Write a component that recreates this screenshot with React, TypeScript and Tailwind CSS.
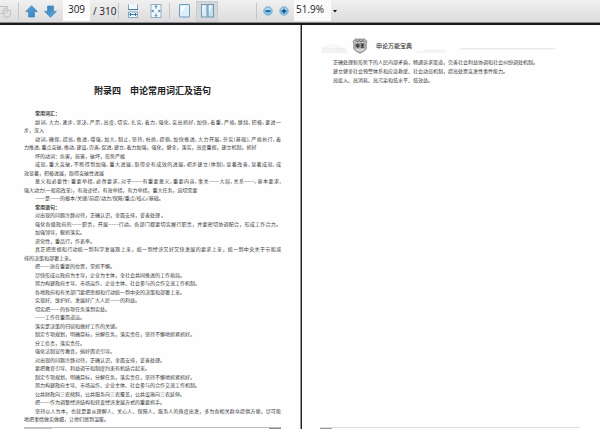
import { clsx } from "clsx";

type Kind = "indent" | "flush" | "indentFull" | "heading";

interface Line {
  text: string;
  kind: Kind;
}

const LEFT_LINES: Line[] = [
  { kind: "heading", text: "常用词汇：" },
  { kind: "indentFull", text: "副词, 大力, 逐步, 坚决, 严厉, 高度, 切实, 扎实, 着力, 强化, 突出抓好, 加快, 着重, 严格, 继续, 积极, 要进一" },
  { kind: "flush", text: "步，深入" },
  { kind: "indentFull", text: "动词, 确保, 提高, 推进, 增强, 加大, 制止, 坚持, 杜绝, 提倡, 加快推进, 大力开展, 夯实(基础), 严格执行, 着" },
  { kind: "flush", text: "力推进, 重点突破, 推动, 建设, 完善, 促进, 建立, 着力加强，强化，健全，落实，高度重视，建立机制，抓好" },
  { kind: "indent", text: "坏的动词：危害，损害，破坏，形势严峻" },
  { kind: "indentFull", text: "成就, 重大突破, 不断得到加强, 重大进展, 取得卓有成效的进展, 初步建立(体制), 显著改善, 显著成就, 成" },
  { kind: "flush", text: "效显著，积极进展，取得突破性进展" },
  { kind: "indentFull", text: "意义和必要性: 重要举措, 必然要求, 对于……有重要意义, 重要内容, 事关……大局, 关系……, 基本要求," },
  { kind: "flush", text: "强大动力(一般指改革)，有效途径，有效举措，有力举措，重大任务，迫切需要" },
  { kind: "indent", text: "……是……的根本/关键/前提/动力/保障/重点/核心/基础。" },
  { kind: "heading", text: "常用语句：" },
  { kind: "indent", text: "对出现的问题冷静对待，正确认识，全面安排，妥善处理 。" },
  { kind: "indentFull", text: "强化各级政府的……职责，开展……行动。各部门都要切实履行职责，并要密切协调配合，形成工作合力。" },
  { kind: "indent", text: "加强领导，狠抓落实。" },
  { kind: "indent", text: "讲党性，重品行，作表率。" },
  { kind: "indentFull", text: "真正把思想和行动统一到科学发展观上来，统一到经济又好又快发展的要求上来，统一到中央关于节能减" },
  { kind: "flush", text: "排的决策和部署上来。" },
  { kind: "indent", text: "把……放在重要的位置，常抓不懈。" },
  { kind: "indent", text: "尽快形成以政府为主导，企业为主体，全社会共同推进的工作格局。" },
  { kind: "indent", text: "努力构建政府主导、市场运作、企业主体、社会参与的合作交流工作机制。" },
  { kind: "indent", text: "各地政府和有关部门要把思想和行动统一到中央的决策和部署上来。" },
  { kind: "indent", text: "实现好、维护好、发展好广大人民……的利益。" },
  { kind: "indent", text: "切实把……的各项任务落到实处。" },
  { kind: "indent", text: "……工作任重而道远。" },
  { kind: "indent", text: "落实是决策的归宿和做好工作的关键。" },
  { kind: "indent", text: "制定专项规划，明确目标，分解任务，落实责任，坚持不懈地抓紧抓好。" },
  { kind: "indent", text: "分工负责，落实责任。" },
  { kind: "indent", text: "强化法制宣传教育，搞好舆论引导。" },
  { kind: "indent", text: "对出现的问题冷静对待，正确认识，全面安排，妥善处理。" },
  { kind: "indent", text: "要把教育引导、利益调节和制度约束有机结合起来。" },
  { kind: "indent", text: "制定专项规划，明确目标，分解任务，落实责任，坚持不懈地抓紧抓好。" },
  { kind: "indent", text: "努力构建政府主导、市场运作、企业主体、社会参与的合作交流工作机制。" },
  { kind: "indent", text: "公共财政向三农倾斜，公共服务向三农覆盖，公共设施向三农延伸。" },
  { kind: "indent", text: "把……作为调整经济结构和转变经济发展方式的重要抓手。" },
  { kind: "indentFull", text: "坚持以人为本，也就是要从理解人、关心人、保障人、服务人的角度出发，多为各相关群众提供方便，尽可能" },
  { kind: "flush", text: "地把事情做实做细，让他们感到温暖。" },
];

const RIGHT_LINES = [
  "正确处理新形势下的人民内部矛盾，畅通诉求渠道，完善社会利益协调和社会纠纷调处机制。",
  "建立健全社会预警体系和应急救援、社会动员机制，提高处置突发性事件能力。",
  "高投入、高消耗、高污染和低水平、低效益。",
];

const Separator = () => <span className="h-4 w-px shrink-0 bg-[#c4c4c4]" />;

const Arrow = ({ down = false }: { down?: boolean }) => (
  <svg viewBox="0 0 13 13" className={clsx("h-[13px] w-[13px]", down && "rotate-180")}>
    <defs>
      <linearGradient id={down ? "arrowDown" : "arrowUp"} x1="0" y1="0" x2="1" y2="1">
        <stop offset="0" stopColor="#65aadb" />
        <stop offset="1" stopColor="#2f7fc0" />
      </linearGradient>
    </defs>
    <path
      d="M6.5 .7 12.3 6.6H9.4V12H3.6V6.6H.7Z"
      fill={down ? "url(#arrowDown)" : "url(#arrowUp)"}
      stroke="#3f80ae"
      strokeWidth=".7"
      strokeLinejoin="round"
    />
  </svg>
);

const FitWidth = () => (
  <svg viewBox="0 0 12 14" className="h-[14px] w-[12px]">
    <path d="M1.5 .5V5.5H10.5V.5M1.5 13.5V8H10.5V13.5Z" fill="#f3f9fc" stroke="#7fa6bd" />
    <path d="M1 5.5H11" stroke="#527f9c" />
    <path d="M2.5 10.5H9.5M4 9 2.5 10.5 4 12M8 9 9.5 10.5 8 12" fill="none" stroke="#347ba8" />
  </svg>
);

const FitPage = () => (
  <svg viewBox="0 0 12 14" className="h-[14px] w-[12px]">
    <rect x="1" y=".5" width="10" height="13" fill="#f3f9fc" stroke="#8fb1c4" />
    <path
      d="M6 1.5V4.7M6 9.3V12.5M1.8 7H4.3M7.7 7H10.2M4.7 3 6 1.6 7.3 3M4.7 11 6 12.4 7.3 11M3 5.7 1.8 7 3 8.3M9 5.7 10.2 7 9 8.3"
      fill="none"
      stroke="#3c7da6"
      strokeWidth=".9"
    />
  </svg>
);

const Sheet = () => (
  <svg viewBox="0 0 11 14" className="h-[14px] w-[11px]">
    <rect x=".5" y=".5" width="10" height="12.5" rx=".5" fill="#dceef8" stroke="#6c9bb9" />
    <path d="M2 2H7L2 9Z" fill="#fbfdff" />
  </svg>
);

const TwoSheets = () => (
  <svg viewBox="0 0 13 14" className="h-[14px] w-[13px]">
    <rect x=".5" y=".5" width="5.5" height="12.5" fill="#d6ebf7" stroke="#7098b3" />
    <rect x="7" y=".5" width="5.5" height="12.5" fill="#c5e0f0" stroke="#7098b3" />
    <path d="M1.5 1.5H4L1.5 9ZM8 1.5H10.5L8 9Z" fill="#f9fdff" />
  </svg>
);

const Zoom = ({ plus = false }: { plus?: boolean }) => (
  <svg viewBox="0 0 10 10" className="h-[10px] w-[10px]">
    <circle cx="5" cy="5" r="4.4" fill="#80bce1" stroke="#8eb6d0" strokeWidth=".7" />
    <path d="M1.7 4A3.5 3.5 0 0 1 8.3 4Z" fill="#b2daef" />
    <path d={plus ? "M2.7 5H7.3M5 2.7V7.3" : "M2.7 5H7.3"} stroke="#164f7d" strokeWidth="1.5" />
  </svg>
);

const Crest = () => (
  <svg viewBox="0 0 16 17" className="h-4 w-4">
    <path
      d="M2 2 4 .8 6 1.7 8 .8 10 1.7 12 .8 14 2 15.3 4 14.5 6V11C14.5 13.5 11 14 8 16.3 5 14 1.5 13.5 1.5 11V6L.7 4Z"
      fill="#c4c4c4"
      stroke="#777"
    />
    <path d="M3 2.5 5 4 7 2.7 9 4 11 2.7 13 4" fill="none" stroke="#555" />
    <rect x="3" y="5.5" width="10" height="5.5" fill="#999" />
    <path d="M4 7H7V9H4ZM5.5 6V10.5M9 6.5H12M9 8H12M9 10H12M10.5 6V10" fill="none" stroke="#2b2b2b" strokeWidth=".8" />
    <path d="M4 12.5H12" stroke="#e8e8e8" />
  </svg>
);

const Toolbar = () => (
  <header className="flex h-[25px] shrink-0 items-start border-b-2 border-[#191919] bg-[#8c8c8e]">
    <div className="flex h-[22px] w-full items-center bg-linear-to-b from-[#f0f0f0] to-[#dcdcde]">
      <button aria-label="Pages" className="w-3">
        <svg viewBox="0 0 12 14" className="h-[14px] w-3">
          <path d="M0 2.5H7.5V5M0 9.5H3M4 6.5H10.5V11L8 13H4Z" fill="#e4e4e4" stroke="#c0c0c0" />
          <circle cx="5" cy="7" r="2.5" fill="none" stroke="#c7c7c7" />
        </svg>
      </button>
      <div className="ml-1.5 flex items-center gap-1.5">
        <Separator />
        <button aria-label="Previous page"><Arrow /></button>
        <button aria-label="Next page"><Arrow down /></button>
      </div>
      <input
        aria-label="Page number"
        defaultValue="309"
        className="ml-1.5 h-[21px] w-[27px] self-start bg-[#fcfcfc] pb-1 text-center text-[10px] leading-4 text-[#222] outline-none"
      />
      <span className="ml-[3px] w-[25px] whitespace-nowrap text-[10px] leading-4 text-[#222]">/ 310</span>
      <Separator />
      <div className="ml-2 flex items-center gap-[11px]">
        <button aria-label="Fit width"><FitWidth /></button>
        <button aria-label="Fit page"><FitPage /></button>
      </div>
      <div className="ml-[7px] flex items-center gap-[9px]">
        <Separator />
        <button aria-label="Single page"><Sheet /></button>
      </div>
      <button aria-label="Two pages" className="ml-[6px] flex h-[21px] w-[22px] items-center justify-center border border-[#cbcbcd] bg-[#d5d6d9]">
        <TwoSheets />
      </button>
      <div className="ml-[38px] flex items-center gap-[6px]">
        <Separator />
        <button aria-label="Zoom out"><Zoom /></button>
        <button aria-label="Zoom in"><Zoom plus /></button>
      </div>
      <input
        aria-label="Zoom level"
        defaultValue="51.9%"
        className="ml-[5px] h-[21px] w-[37px] self-start bg-[#fafafa] pb-1 pl-0.5 text-[10px] leading-4 text-[#222] outline-none"
      />
      <button aria-label="Zoom presets" className="ml-0.5">
        <svg viewBox="0 0 4 3" className="h-[3px] w-1">
          <path d="M0 0H4L2 2.5Z" fill="#111" />
        </svg>
      </button>
    </div>
  </header>
);

const TextLine = ({ text, kind }: Line) => (
  <p
    className={clsx(
      "h-2",
      kind !== "flush" && "pl-[11px]",
      kind === "indentFull" ? "[text-align-last:justify]" : "whitespace-nowrap",
      kind === "heading" && "font-bold",
    )}
  >
    {text}
  </p>
);

const App = () => {
  return (
    <div className="flex h-screen min-h-[429px] flex-col bg-white font-['Open_Sans',sans-serif]">
      <Toolbar />
      <main
        lang="zh-CN"
        className="grid flex-1 grid-cols-2 bg-[#fefefe] font-['Noto_Sans_CJK_SC',sans-serif] text-[5px] leading-2 text-[#3a3a3a]"
      >
        <article className="flex flex-col pt-[58px] pr-[19px] pl-6">
          <h1 className="text-center text-[9px] leading-4 font-bold text-[#222]">附录四　申论常用词汇及语句</h1>
          <section className="mt-[10px] flex flex-1 flex-col justify-between">
            {LEFT_LINES.map((line, i) => (
              <TextLine key={i} {...line} />
            ))}
          </section>
          <footer className="mt-1 flex h-0.5 items-start justify-between border-t border-[#bcbcbc]">
            <span className="h-px w-7 bg-[#c8c8c8]" />
            <span className="h-px w-3 bg-[#888]" />
          </footer>
        </article>

        <article className="flex flex-col border-l border-[#9a9a9a]">
          <div className="flex flex-1 flex-col border-l border-[#222] pt-[13px] pr-5 pl-[18px]">
            <header className="flex h-4 items-center">
              <svg viewBox="0 0 32 17" className="h-4 w-8">
                <path d="M1 11H26M1 13H28M1 15H28" stroke="#dedede" strokeWidth=".7" />
                <path d="M1 11 12 7 18 9 26 14" fill="none" stroke="#e6e6e6" strokeWidth=".7" />
              </svg>
              <Crest />
              <h2 className="ml-2 text-[6px] leading-2 font-medium text-[#333]">申论万能宝典</h2>
              <svg viewBox="0 0 170 17" preserveAspectRatio="none" className="h-4 min-w-0 flex-1">
                <path d="M4 15H34M12 13H34" stroke="#e2e2e2" strokeWidth=".7" />
                <path d="M48 11.5H145" stroke="#d6d6d6" strokeWidth=".7" />
              </svg>
            </header>
            <section className="mt-1 flex flex-col gap-px pl-[13px]">
              {RIGHT_LINES.map((text) => (
                <p key={text} className="whitespace-nowrap">{text}</p>
              ))}
            </section>
            <footer className="mt-auto flex h-0.5 border-t border-[#dedede]">
              <span className="h-px w-3 bg-[#999]" />
            </footer>
          </div>
        </article>
      </main>
    </div>
  );
};

export default App;
